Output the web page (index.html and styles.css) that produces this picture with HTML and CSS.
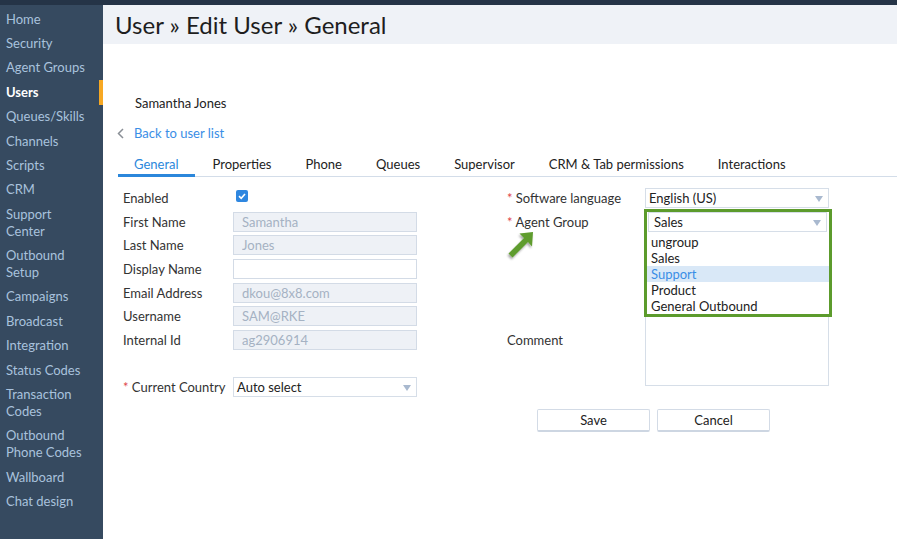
FILE: index.html
```html
<!DOCTYPE html>
<html>
<head>
    <meta charset="UTF-8">
    <meta name="viewport" content="width=device-width, initial-scale=1.0">
    <title>User - Edit User</title>
    <link rel="stylesheet" href="styles.css">
</head>

<body>

    <div class="topbar"></div>

    <div class="layout">

        <div class="sidebar">
            <ul>
                <li><a href="#">Home</a></li>
                <li><a href="#">Security</a></li>
                <li><a href="#">Agent Groups</a></li>
                <li class="active"><a href="#">Users</a></li>
                <li><a href="#">Queues/Skills</a></li>
                <li><a href="#">Channels</a></li>
                <li><a href="#">Scripts</a></li>
                <li><a href="#">CRM</a></li>
                <li><a href="#">Support Center</a></li>
                <li><a href="#">Outbound Setup</a></li>
                <li><a href="#">Campaigns</a></li>
                <li><a href="#">Broadcast</a></li>
                <li><a href="#">Integration</a></li>
                <li><a href="#">Status Codes</a></li>
                <li><a href="#">Transaction Codes</a></li>
                <li><a href="#">Outbound Phone Codes</a></li>
                <li><a href="#">Wallboard</a></li>
                <li><a href="#">Chat design</a></li>
            </ul>
        </div>

        <div class="main">
            <div class="page-title">
                <h1>User » Edit User » General</h1>
            </div>

            <div class="content">
                <div class="user-name">Samantha Jones</div>

                <a href="#" class="back-link">
                    <svg class="chev" width="7" height="11" viewBox="0 0 7 11"><polyline points="6,1 1.5,5.5 6,10" fill="none" stroke="#8a8f96" stroke-width="1.5"/></svg>
                    Back to user list
                </a>

                <ul class="tabs">
                    <li class="active">General</li>
                    <li>Properties</li>
                    <li>Phone</li>
                    <li>Queues</li>
                    <li>Supervisor</li>
                    <li>CRM &amp; Tab permissions</li>
                    <li>Interactions</li>
                </ul>

                <div class="form">
                    <!-- left column -->
                    <div class="col col-left">
                        <div class="row">
                            <label>Enabled</label>
                            <span class="check">
                                <svg width="12" height="12" viewBox="0 0 12 12"><polyline points="3,6.2 5.2,8.3 9,4" fill="none" stroke="#fff" stroke-width="1.6"/></svg>
                            </span>
                        </div>
                        <div class="row"><label>First Name</label><input type="text" value="Samantha" disabled></div>
                        <div class="row"><label>Last Name</label><input type="text" value="Jones" disabled></div>
                        <div class="row"><label>Display Name</label><input type="text" value=""></div>
                        <div class="row"><label>Email Address</label><input type="text" value="dkou@8x8.com" disabled></div>
                        <div class="row"><label>Username</label><input type="text" value="SAM@RKE" disabled></div>
                        <div class="row"><label>Internal Id</label><input type="text" value="ag2906914" disabled></div>
                        <div class="row"></div>
                        <div class="row">
                            <label><span class="req">*</span> Current Country</label>
                            <div class="select">Auto select<span class="caret"></span></div>
                        </div>
                    </div>

                    <!-- right column -->
                    <div class="col col-right">
                        <div class="row">
                            <label><span class="req">*</span> Software language</label>
                            <div class="select">English (US)<span class="caret"></span></div>
                        </div>
                        <div class="row">
                            <label><span class="req">*</span> Agent Group</label>
                            <div class="agent-cell">
                                <div class="agent-pop">
                                    <div class="select select-open">Sales<span class="caret"></span></div>
                                    <ul class="options">
                                        <li>ungroup</li>
                                        <li>Sales</li>
                                        <li class="hover">Support</li>
                                        <li>Product</li>
                                        <li>General Outbound</li>
                                    </ul>
                                </div>
                            </div>
                            <svg class="pointer" width="32" height="32" viewBox="0 0 32 32">
                                <defs>
                                    <filter id="sh" x="-30%" y="-30%" width="160%" height="160%">
                                        <feDropShadow dx="-1" dy="2" stdDeviation="1.2" flood-color="#000" flood-opacity="0.35"/>
                                    </filter>
                                </defs>
                                <polygon points="27,2 13.5,3.5 18,8 2.5,23.5 6.5,27.5 22,12 26,16.5" fill="#5e9c2e" filter="url(#sh)"/>
                            </svg>
                        </div>
                        <div class="row"></div>
                        <div class="row"></div>
                        <div class="row comment-row">
                            <label>Comment</label>
                            <textarea></textarea>
                        </div>
                    </div>
                </div>

                <div class="buttons">
                    <button class="btn">Save</button>
                    <button class="btn">Cancel</button>
                </div>
            </div>
        </div>
    </div>

</body>

</html>
```

FILE: styles.css
```css
body {
    font-family: 'Lato', 'Open Sans', sans-serif;
    margin: 0;
    padding: 0;
    color: #333;
    background-color: #fff;
    font-size: 13px;
}

.topbar {
    height: 5px;
    background-color: #253447;
}

.layout {
    display: flex;
    min-height: calc(100vh - 5px);
}

/* sidebar */

.sidebar {
    width: 103px;
    flex-shrink: 0;
    background-color: #364a60;
}

.sidebar ul {
    list-style: none;
    margin: 0;
    padding: 2px 0 0 0;
}

.sidebar li {
    padding: 3.7px 10px 3.7px 6px;
    line-height: 17px;
}

.sidebar a {
    color: #a9c2dd;
    text-decoration: none;
}

.sidebar li.active {
    box-shadow: inset -4px 0 0 #f7a823;
}

.sidebar li.active a {
    color: #fff;
    font-weight: bold;
}

/* main */

.main {
    flex-grow: 1;
}

.page-title {
    background-color: #eff2f7;
    height: 39px;
    padding-left: 12px;
}

.page-title h1 {
    margin: 0;
    font-weight: normal;
    font-size: 24px;
    line-height: 40px;
    color: #1e1e1e;
}

.content {
    padding-top: 50.5px;
}

.user-name {
    padding-left: 32px;
    line-height: 17px;
    color: #222;
}

.back-link {
    display: flex;
    align-items: center;
    margin-top: 13px;
    padding-left: 14px;
    line-height: 17px;
    color: #3a8ee6;
    text-decoration: none;
}

.back-link .chev {
    margin-right: 10px;
}

.tabs {
    list-style: none;
    display: flex;
    margin: 9px 0 0 15px;
    padding: 0;
    border-bottom: 1px solid #d3dde9;
}

.tabs li {
    padding: 5px 16px 1.5px;
    line-height: 17px;
    border-bottom: 3px solid transparent;
    margin-bottom: -1px;
    margin-right: 2px;
    color: #222;
}

.tabs li.active {
    color: #2b87db;
    border-bottom-color: #2b87db;
}

/* form */

.form {
    display: flex;
    margin-top: 9px;
}

.col-left {
    padding-left: 20px;
    width: 294px;
}

.col-right {
    margin-left: 90px;
    width: 322px;
}

.row {
    display: flex;
    align-items: center;
    height: 23.7px;
    position: relative;
}

.col-left label {
    width: 110px;
    flex-shrink: 0;
}

.col-right label {
    width: 138px;
    flex-shrink: 0;
}

.req {
    color: #e0474c;
}

.check {
    display: inline-flex;
    width: 12px;
    height: 12px;
    margin-left: 3px;
    margin-top: -4px;
    border-radius: 2px;
    background-color: #2f87e0;
}

input[type="text"] {
    box-sizing: border-box;
    width: 184px;
    height: 20px;
    margin: 0;
    padding: 0 8px;
    border: 1px solid #d3dbe6;
    font-family: inherit;
    font-size: 13px;
    color: #333;
    background-color: #fff;
}

input[type="text"]:disabled {
    background-color: #eef1f6;
    color: #a5b2c3;
}

.select {
    box-sizing: border-box;
    position: relative;
    width: 184px;
    height: 20px;
    line-height: 18px;
    padding: 0 3px;
    border: 1px solid #d6dee8;
    background-color: #fff;
    color: #222;
}

.caret {
    position: absolute;
    right: 5px;
    top: 7px;
    width: 0;
    height: 0;
    border-left: 4.5px solid transparent;
    border-right: 4.5px solid transparent;
    border-top: 6px solid #a9b9cf;
}

/* agent group dropdown with highlight frame */

.agent-cell {
    width: 184px;
    height: 20px;
    position: relative;
}

.agent-pop {
    position: absolute;
    left: -1px;
    top: -3px;
    width: 182px;
    border: 3px solid #5c9b2c;
    background-color: #fff;
    z-index: 2;
}

.agent-pop .select {
    width: 179px;
    margin: 0 0 0 1px;
    padding-left: 5px;
}

.options {
    list-style: none;
    margin: 2px 0 0 0;
    padding: 0;
}

.options li {
    line-height: 16px;
    padding-left: 4px;
    color: #222;
}

.options li.hover {
    background-color: #d9e8f7;
    color: #3a8ee6;
}

.pointer {
    position: absolute;
    left: -1px;
    top: 20px;
}

.comment-row {
    align-items: flex-start;
    height: auto;
}

.comment-row label {
    padding-top: 51px;
}

textarea {
    box-sizing: border-box;
    width: 184px;
    height: 105px;
    margin: 0;
    border: 1px solid #d6dee8;
    resize: none;
    font-family: inherit;
}

/* buttons */

.buttons {
    display: flex;
    gap: 7px;
    margin: 10px 0 0 434px;
}

.btn {
    width: 113px;
    height: 23px;
    background-color: #fff;
    border: 1px solid #d3dbe6;
    border-bottom: 2px solid #cdd6e2;
    border-radius: 2px;
    font-family: inherit;
    font-size: 13px;
    color: #222;
    cursor: pointer;
}
```
